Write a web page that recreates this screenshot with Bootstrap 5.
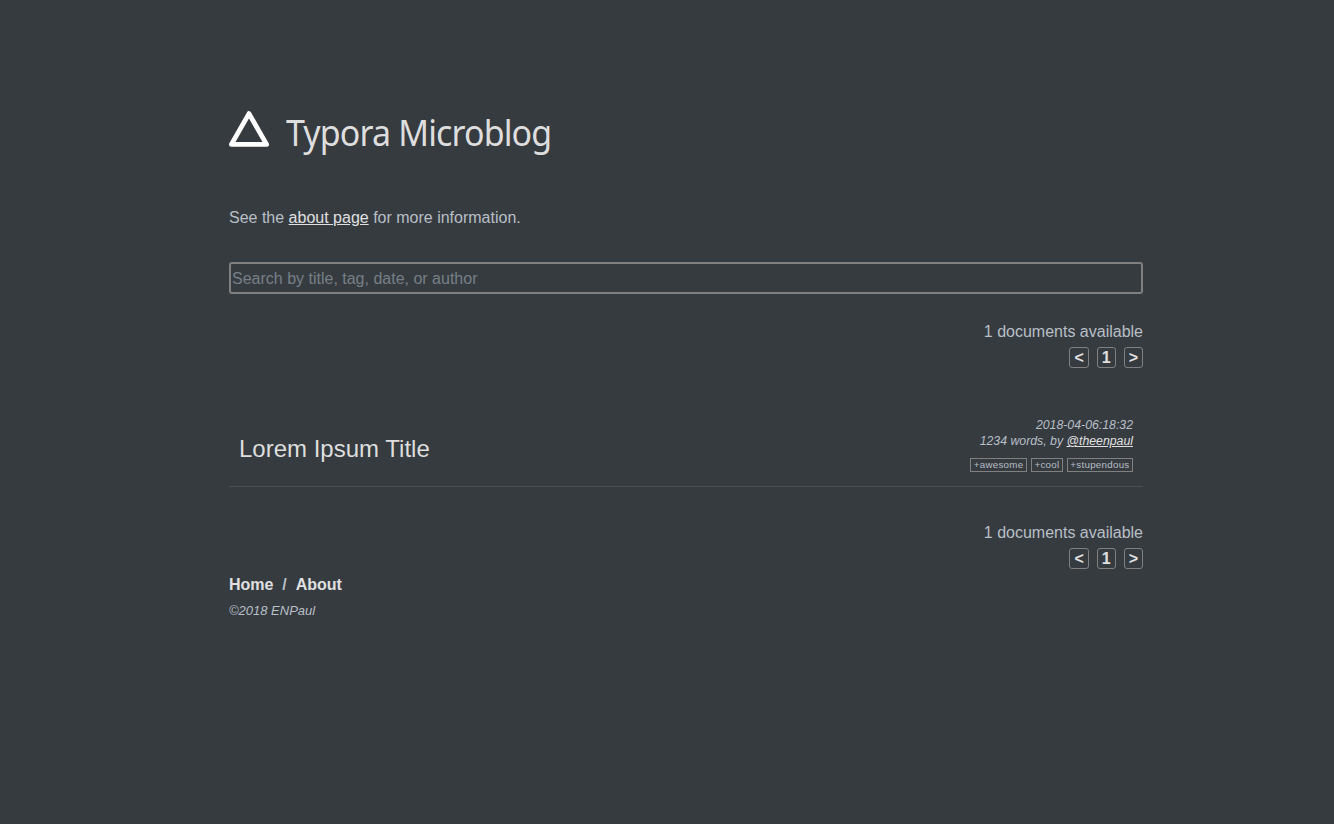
<!DOCTYPE html>
<html lang="en">
<head>
<meta charset="utf-8">
<meta name="viewport" content="width=device-width, initial-scale=1">
<title>Typora Microblog</title>
<link href="https://cdn.jsdelivr.net/npm/bootstrap@5.3.0/dist/css/bootstrap.min.css" rel="stylesheet">
<script src="https://cdn.jsdelivr.net/npm/bootstrap@5.3.0/dist/js/bootstrap.bundle.min.js" defer></script>
<style>
body { background: #363b40; color: #b8bfc6; font: 16px/26px "Liberation Sans", Arial, sans-serif; overflow: hidden; }
a { color: #e0e0e0; }
a:hover { color: #fff; }
.page-body { width: 914px; margin-left: 229px; padding-top: 103px; }
.site-header { height: 60px; }
.site-logo { width: 40px; height: 36px; margin-top: 8px; }
.site-title { font: 400 35.5px/58px "Noto Sans", "Open Sans", sans-serif; letter-spacing: -.9px; color: #dedede; margin-left: 17px; transform: scaleX(.957); transform-origin: left; }
.intro { margin-top: 42px; }
.search-box { height: 32px; padding: 2px 1px 0; margin-top: 31px; background: transparent; border: 2px solid #808080; border-radius: 3px; color: #b8bfc6; font-size: 16px; line-height: 26px; }
.search-box::placeholder { color: #777f86; opacity: 1; }
.pager-block { margin-top: 25px; }
.pager-bottom { margin-top: 33px; }
.pager { gap: 8px; margin-top: 2px; }
.pager a { height: 21px; padding: 0 4px; border: 1px solid #808080; border-radius: 3px; font-weight: 700; line-height: 19px; }
.entry { height: 75px; margin-top: 44px; padding: 0 10px; border-bottom: 1px solid #4a4f54; }
.entry-title { font-size: 24px; line-height: 30px; color: #dedede; margin-top: 22px; }
.entry-meta { font-size: 12.3px; line-height: 16px; margin-top: 5px; }
.tag-row { gap: 4px; margin-top: 9px; }
.tag-row span { height: 14px; padding: 0 2.5px; border: 1px solid #808080; font: 9.8px/12px "Liberation Sans", Arial, sans-serif; letter-spacing: .25px; }
.site-footer { margin-top: 3px; }
.copyright { font-size: 13px; }
</style>
</head>
<body class="vh-100">
<div class="page-body">
  <header class="site-header d-flex align-items-start">
    <svg class="site-logo" viewBox="0 0 40 36" aria-hidden="true"><path d="M20 2.6 37.6 33.4H2.4Z" fill="none" stroke="#fff" stroke-width="4.8" stroke-linejoin="round"/></svg>
    <h1 class="site-title mb-0">Typora Microblog</h1>
  </header>
  <p class="intro mb-0">See the <a href="#">about page</a> for more information.</p>
  <input class="search-box w-100 d-block" type="text" placeholder="Search by title, tag, date, or author">
  <div class="pager-block text-end">
    <div>1 documents available</div>
    <nav class="pager d-flex justify-content-end"><a class="text-decoration-none" href="#">&lt;</a><a class="text-decoration-none" href="#">1</a><a class="text-decoration-none" href="#">&gt;</a></nav>
  </div>
  <article class="entry d-flex justify-content-between align-items-start">
    <h2 class="entry-title mb-0 fw-normal">Lorem Ipsum Title</h2>
    <div class="entry-meta text-end">
      <div class="fst-italic">2018-04-06:18:32</div>
      <div class="fst-italic">1234 words, by <a href="#">@theenpaul</a></div>
      <div class="tag-row d-flex justify-content-end"><span>+awesome</span><span>+cool</span><span>+stupendous</span></div>
    </div>
  </article>
  <div class="pager-block pager-bottom text-end">
    <div>1 documents available</div>
    <nav class="pager d-flex justify-content-end"><a class="text-decoration-none" href="#">&lt;</a><a class="text-decoration-none" href="#">1</a><a class="text-decoration-none" href="#">&gt;</a></nav>
  </div>
  <footer class="site-footer">
    <nav class="fw-bold"><a class="text-decoration-none" href="#">Home</a>&nbsp; / &nbsp;<a class="text-decoration-none" href="#">About</a></nav>
    <div class="copyright fst-italic">©2018 ENPaul</div>
  </footer>
</div>
</body>
</html>
